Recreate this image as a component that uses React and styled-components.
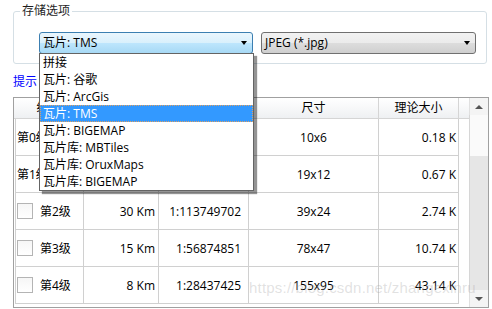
import React from "react"
import styled, { createGlobalStyle } from "styled-components"

const FONT = `"Open Sans", "Noto Sans CJK SC", sans-serif`

const GlobalStyle = createGlobalStyle`
  html, body {
    margin: 0;
    padding: 0;
    background: #ffffff;
  }
  body {
    font-family: ${FONT};
    font-size: 12px;
    color: #000;
    overflow: hidden;
  }
`

const tileTypes = [
  "拼接",
  "瓦片: 谷歌",
  "瓦片: ArcGis",
  "瓦片: TMS",
  "瓦片: BIGEMAP",
  "瓦片库: MBTiles",
  "瓦片库: OruxMaps",
  "瓦片库: BIGEMAP",
]

const levels = [
  { id: 0, name: "第0级", res: "120 Km", scale: "1:455000000", size: "10x6", bytes: "0.18 K", check: false },
  { id: 1, name: "第1级", res: "60 Km", scale: "1:227499404", size: "19x12", bytes: "0.67 K", check: false },
  { id: 2, name: "第2级", res: "30 Km", scale: "1:113749702", size: "39x24", bytes: "2.74 K", check: true },
  { id: 3, name: "第3级", res: "15 Km", scale: "1:56874851", size: "78x47", bytes: "10.74 K", check: true },
  { id: 4, name: "第4级", res: "8 Km", scale: "1:28437425", size: "155x95", bytes: "43.14 K", check: true },
]

const App = () => {
  return (
    <Page>
      <GlobalStyle />
      <Group>
        <Legend>存储选项</Legend>
        <ComboRow>
          <ComboWrap>
            <Combo $active $width={214}>
              瓦片: TMS
              <Arrow />
            </Combo>
            <DropList>
              {tileTypes.map((t, i) => (
                <DropItem key={i} $selected={i === 3}>
                  {t}
                </DropItem>
              ))}
            </DropList>
          </ComboWrap>
          <Combo $width={215}>
            JPEG (*.jpg)
            <Arrow />
          </Combo>
        </ComboRow>
      </Group>
      <HintRow>
        <HintLink>提示</HintLink>
      </HintRow>
      <Table>
        <GridArea>
          <Header>
            <HeadCell $w={70}>级别</HeadCell>
            <HeadCell $w={75}>分辨率</HeadCell>
            <HeadCell $w={90}>比例尺</HeadCell>
            <HeadCell $w={130}>尺寸</HeadCell>
            <HeadCell $w={80}>理论大小</HeadCell>
          </Header>
          <Body>
            {levels.map(row => (
              <Row key={row.id}>
                <LevelCell>
                  {row.check && <Check />}
                  {row.name}
                </LevelCell>
                <Cell $align="right" $pad={3}>{row.res}</Cell>
                <Cell $align="right" $pad={7}>{row.scale}</Cell>
                <Cell $align="center">{row.size}</Cell>
                <Cell $align="right" $pad={2}>{row.bytes}</Cell>
              </Row>
            ))}
          </Body>
        </GridArea>
        <ScrollBar>
          <ScrollBtn>
            <ScrollArrow $up />
          </ScrollBtn>
          <Thumb />
          <Track />
          <ScrollBtn>
            <ScrollArrow />
          </ScrollBtn>
        </ScrollBar>
      </Table>
      <Watermark>https://blog.csdn.net/zhangexinru</Watermark>
    </Page>
  )
}

const Page = styled.div`
  position: relative;
  width: 492px;
  height: 309px;
  box-sizing: border-box;
  padding: 4px 0 0 13px;
  overflow: hidden;
`

const Group = styled.fieldset`
  margin: 0;
  padding: 0;
  width: 474px;
  box-sizing: border-box;
  border: 1px solid #d5dfe5;
  border-radius: 3px;
  min-inline-size: 0;
`

const Legend = styled.legend`
  margin-left: 6px;
  padding: 0 2px;
  font-size: 12px;
  line-height: 14px;
  color: #1e1e1e;
`

const ComboRow = styled.div`
  display: flex;
  gap: 8px;
  padding: 14px 0 9px 25px;
`

const ComboWrap = styled.div`
  position: relative;
`

const Combo = styled.div`
  display: flex;
  align-items: center;
  justify-content: space-between;
  width: ${p => p.$width}px;
  height: 22px;
  box-sizing: border-box;
  padding: 0 5px 0 3px;
  border: 1px solid ${p => (p.$active ? "#3c7fb1" : "#707070")};
  border-radius: 3px;
  background: ${p =>
    p.$active
      ? "linear-gradient(#eaf6fd 0%, #d9f0fc 50%, #bee6fd 50%, #a7d9f5 100%)"
      : "linear-gradient(#f2f2f2 0%, #ebebeb 50%, #dddddd 50%, #cfcfcf 100%)"};
  line-height: 20px;
  font-size: 12px;
`

const Arrow = styled.span`
  width: 0;
  height: 0;
  border-left: 3.5px solid transparent;
  border-right: 3.5px solid transparent;
  border-top: 4px solid #000;
`

const DropList = styled.div`
  position: absolute;
  top: 21px;
  left: 0;
  z-index: 10;
  width: 215px;
  box-sizing: border-box;
  border: 1px solid #646464;
  background: #fff;
  box-shadow: 3px 3px 1px rgba(0, 0, 0, 0.42);
`

const DropItem = styled.div`
  height: 17px;
  line-height: 17px;
  box-sizing: border-box;
  padding-left: 3px;
  font-size: 12px;
  white-space: nowrap;
  background: ${p => (p.$selected ? "#3399ff" : "transparent")};
  color: ${p => (p.$selected ? "#fff" : "#000")};
  outline: ${p => (p.$selected ? "1px dotted #e0a060" : "none")};
  outline-offset: -1px;
`

const HintRow = styled.div`
  height: 16px;
  margin: 10px 0 7px;
  line-height: 16px;
`

const HintLink = styled.a`
  color: #0000ff;
  font-size: 12px;
  cursor: pointer;
`

const Table = styled.div`
  display: flex;
  width: 476px;
  height: 211px;
  box-sizing: border-box;
  border: 1px solid #a0a0a0;
  background: #fff;
  overflow: hidden;
`

const GridArea = styled.div`
  width: 455px;
  display: flex;
  flex-direction: column;
`

const Header = styled.div`
  display: flex;
  height: 21px;
  box-sizing: border-box;
  border-bottom: 1px solid #d5d5d5;
  background: linear-gradient(#ffffff 0%, #f7f8f9 50%, #eef0f2 100%);
`

const HeadCell = styled.div`
  width: ${p => p.$w}px;
  box-sizing: border-box;
  border-right: 1px solid #d5d5d5;
  text-align: center;
  line-height: 20px;
  font-size: 12px;
`

const Body = styled.div`
  margin-left: 1px;
  border-left: 1px solid #d0d0d0;
  width: 444px;
  box-sizing: border-box;
`

const Row = styled.div`
  display: grid;
  grid-template-columns: 68px 75px 90px 130px 80px;
  height: 37px;
`

const Cell = styled.div`
  display: flex;
  align-items: center;
  justify-content: ${p =>
    p.$align === "right" ? "flex-end" : p.$align === "center" ? "center" : "flex-start"};
  padding-right: ${p => p.$pad || 0}px;
  box-sizing: border-box;
  border-right: 1px solid #d0d0d0;
  border-bottom: 1px solid #d0d0d0;
  font-size: 12px;
  white-space: nowrap;
  overflow: hidden;
`

const LevelCell = styled(Cell)`
  padding-left: 1px;
  gap: 7px;
`

const Check = styled.span`
  width: 16px;
  height: 16px;
  box-sizing: border-box;
  border: 1px solid #b4b4b4;
  background: linear-gradient(#f6f6f6, #ffffff);
  flex-shrink: 0;
`

const ScrollBar = styled.div`
  width: 19px;
  display: flex;
  flex-direction: column;
  margin-left: auto;
  background: #e8e8e8;
`

const ScrollBtn = styled.div`
  height: 17px;
  display: flex;
  align-items: center;
  justify-content: center;
  background: #f4f4f4;
  border-left: 1px solid #e0e0e0;
`

const ScrollArrow = styled.span`
  width: 0;
  height: 0;
  border-left: 4px solid transparent;
  border-right: 4px solid transparent;
  ${p => (p.$up ? "border-bottom: 4px solid #555;" : "border-top: 4px solid #555;")}
`

const Thumb = styled.div`
  height: 41px;
  background: #fafafa;
  border-left: 1px solid #d6d6d6;
`

const Track = styled.div`
  flex: 1;
  background: #e6e6e6;
  border-left: 1px solid #d6d6d6;
`

const Watermark = styled.div`
  position: absolute;
  left: 249px;
  top: 279px;
  font-family: "Liberation Sans", Arial, sans-serif;
  font-size: 15px;
  letter-spacing: 0.2px;
  color: rgba(170, 170, 170, 0.35);
  pointer-events: none;
  white-space: nowrap;
`

export default App
